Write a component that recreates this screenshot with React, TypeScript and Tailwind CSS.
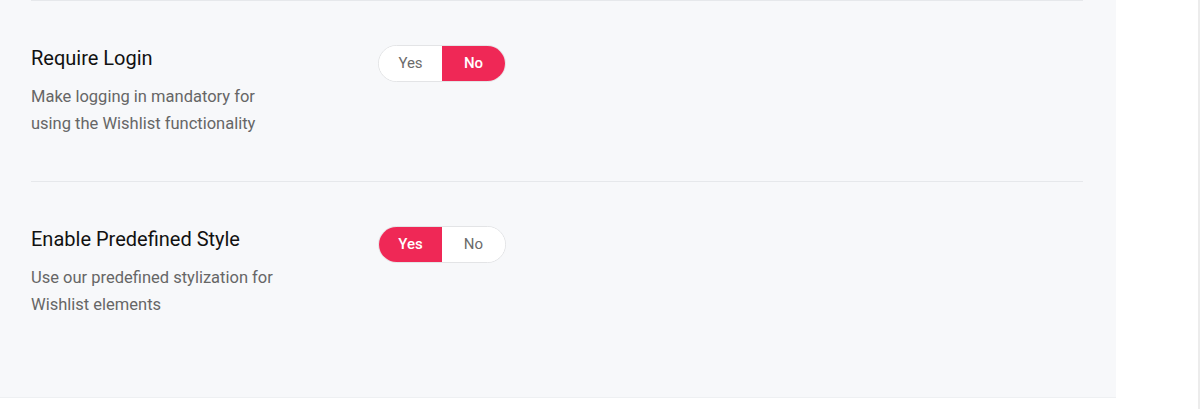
import { useState } from "react";

// setting rows of the wishlist panel
const settings = [
  {
    id: "require-login",
    title: "Require Login",
    desc: "Make logging in mandatory for using the Wishlist functionality",
    value: false,
  },
  {
    id: "predefined-style",
    title: "Enable Predefined Style",
    desc: "Use our predefined stylization for Wishlist elements",
    value: true,
  },
];

function YesNoToggle({ initial }: { initial: boolean }) {
  const [on, setOn] = useState(initial);
  return (
    <div className="flex h-[37px] w-[128px] overflow-hidden rounded-full border border-[#e3e4e6] bg-white text-[15px]">
      <button
        onClick={() => setOn(true)}
        className={
          on
            ? "flex-1 bg-[#ef2856] font-medium text-white"
            : "flex-1 bg-white text-[#6b6b6b]"
        }
      >
        Yes
      </button>
      <button
        onClick={() => setOn(false)}
        className={
          !on
            ? "flex-1 bg-[#ef2856] font-medium text-white"
            : "flex-1 bg-white text-[#6b6b6b]"
        }
      >
        No
      </button>
    </div>
  );
}

export default function App() {
  return (
    <div
      className="flex h-[409px] w-full bg-white"
      style={{ fontFamily: "Roboto, 'Liberation Sans', sans-serif" }}
    >
      <div className="h-[397px] w-[1116px] bg-[#f7f8fa] px-[31px] shadow-[0_1px_0_#eef0f2]">
        <div className="w-[1052px]">
          {settings.map((s) => (
            <div
              key={s.id}
              className="grid grid-cols-[347px_1fr] border-t border-[#e6e8eb] pb-[44px] pt-[43px]"
            >
              <div>
                <h3 className="text-[20px] leading-[28px] text-[#111]">{s.title}</h3>
                <p className="mt-[11px] w-[260px] text-[16.5px] leading-[27px] text-[#666]">
                  {s.desc}
                </p>
              </div>
              <div className="pt-[1px]">
                <YesNoToggle initial={s.value} />
              </div>
            </div>
          ))}
        </div>
      </div>
      <div className="flex-1" />
      <div className="w-[2px] bg-[#ececec]" />
    </div>
  );
}
